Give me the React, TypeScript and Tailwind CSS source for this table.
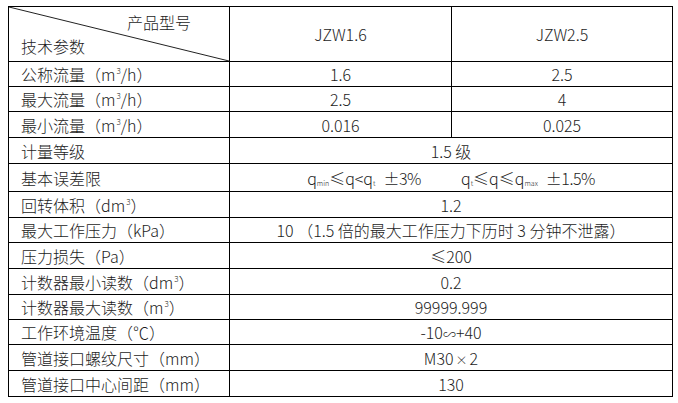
import React from "react"

const Sup = () => <sup className="text-[8px] relative -top-[7px] ml-[1px]">3</sup>

const Sub = ({ children }: { children: React.ReactNode }) => (
  <sub className="text-[7px] align-baseline relative top-[1px]">{children}</sub>
)

type Row = { label: React.ReactNode; a: React.ReactNode; b?: React.ReactNode; h: string }

const rows: Row[] = [
  { label: <>公称流量（m<Sup />/h）</>, a: "1.6", b: "2.5", h: "h-[25px]" },
  { label: <>最大流量（m<Sup />/h）</>, a: "2.5", b: "4", h: "h-[25px]" },
  { label: <>最小流量（m<Sup />/h）</>, a: "0.016", b: "0.025", h: "h-[26px]" },
  { label: "计量等级", a: "1.5 级", h: "h-[26px]" },
  {
    label: "基本误差限",
    a: (
      <>
        q<Sub>min</Sub>≤q&lt;q<Sub>t</Sub>
        <span className="ml-[8px] tracking-[-0.5px]">±3%</span>
        <span className="ml-[40px]">q<Sub>t</Sub>≤q≤q<Sub>max</Sub></span>
        <span className="ml-[8px] tracking-[-0.5px]">±1.5%</span>
      </>
    ),
    h: "h-[28px]",
  },
  { label: <>回转体积（dm<Sup />）</>, a: "1.2", h: "h-[26px]" },
  { label: "最大工作压力（kPa）", a: "10 （1.5 倍的最大工作压力下历时 3 分钟不泄露）", h: "h-[25px]" },
  { label: "压力损失（Pa）", a: "≤200", h: "h-[26px]" },
  { label: <>计数器最小读数（dm<Sup />）</>, a: "0.2", h: "h-[26px]" },
  { label: <>计数器最大读数（m<Sup />）</>, a: "99999.999", h: "h-[25px]" },
  { label: "工作环境温度（℃）", a: <>-10<span className="text-[13px]">∽</span>+40</>, h: "h-[25px]" },
  { label: "管道接口螺纹尺寸（mm）", a: <>M30<span className="text-[12px] mx-[2px]">×</span>2</>, h: "h-[26px]" },
  { label: "管道接口中心间距（mm）", a: "130", h: "h-[26px]" },
]

export default function App() {
  return (
    <div className="min-h-screen bg-white pt-[6px] pl-[8px] font-['Noto_Sans_CJK_SC',sans-serif] font-light text-[16px] text-[#1c1c1c]">
      <table className="w-[664px] table-fixed border-collapse">
        <colgroup>
          <col className="w-[221px]" />
          <col className="w-[222px]" />
          <col className="w-[221px]" />
        </colgroup>
        <tbody>
          <tr className="h-[55px]">
            <td className="relative border border-black p-0 align-top">
              <svg className="absolute inset-0 h-full w-full" preserveAspectRatio="none">
                <line x1="0" y1="0" x2="100%" y2="100%" stroke="#222" strokeWidth="1" />
              </svg>
              <div className="flex flex-col leading-[24px] pt-[3px]">
                <span className="self-end pr-[38px]">产品型号</span>
                <span className="pl-[12px]">技术参数</span>
              </div>
            </td>
            <td className="border border-black text-center">JZW1.6</td>
            <td className="border border-black text-center">JZW2.5</td>
          </tr>
          {rows.map((r, i) => (
            <tr key={i} className={r.h}>
              <td className="border border-black pl-[12px] py-0 whitespace-nowrap leading-none">{r.label}</td>
              {r.b !== undefined ? (
                <>
                  <td className="border border-black text-center py-0 leading-none">{r.a}</td>
                  <td className="border border-black text-center py-0 leading-none">{r.b}</td>
                </>
              ) : (
                <td colSpan={2} className="border border-black text-center py-0 whitespace-nowrap leading-none">
                  {r.a}
                </td>
              )}
            </tr>
          ))}
        </tbody>
      </table>
    </div>
  )
}
